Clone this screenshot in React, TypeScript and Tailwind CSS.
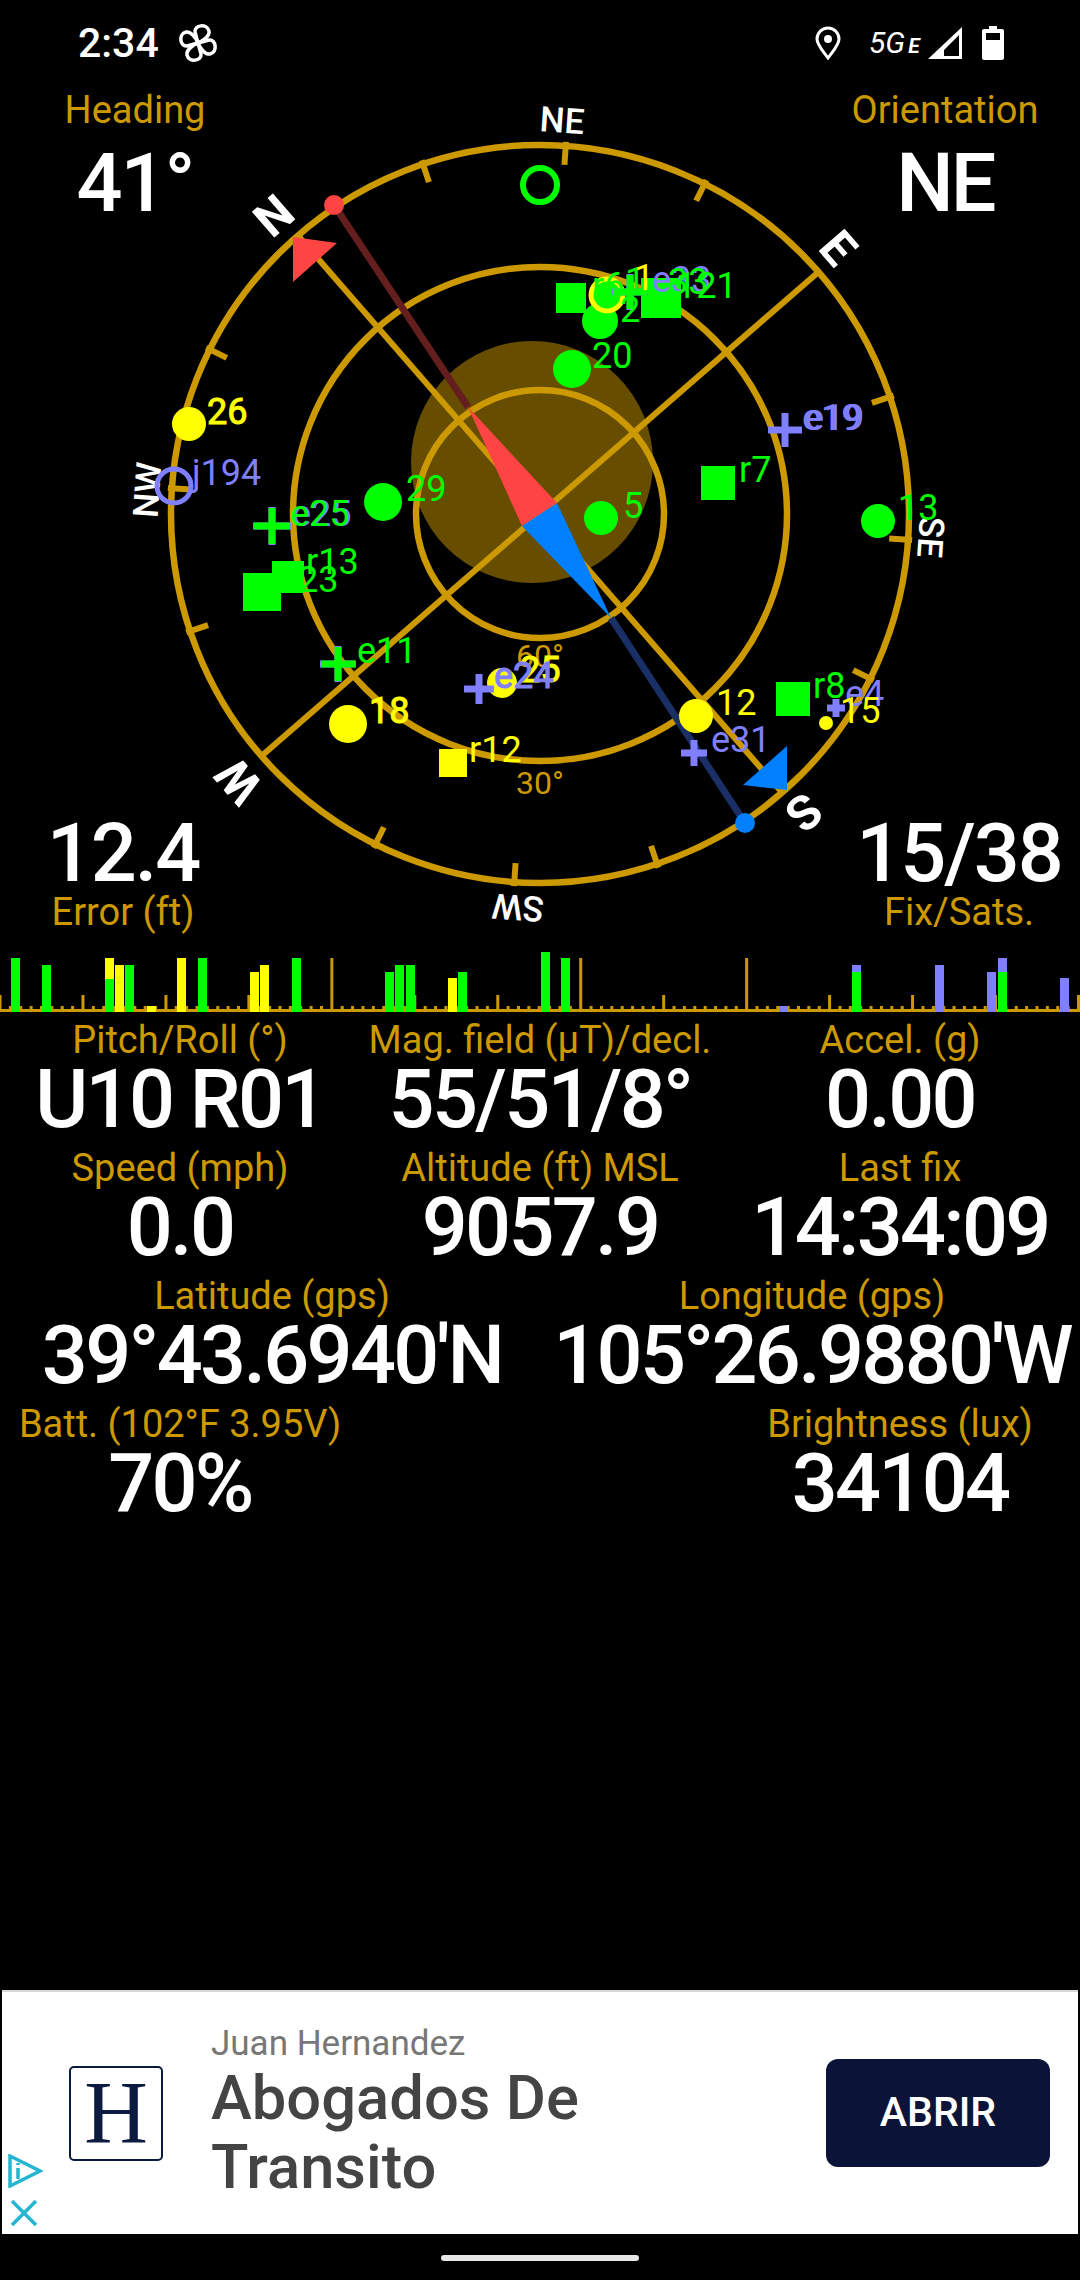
import React from "react";

const GOLD = "#cc9900";
const GREEN = "#00ff00";
const YELLOW = "#ffff00";
const PURPLE = "#7f7fff";
const CX = 540;
const CY = 514;

function polar(angle: number, r: number) {
  const a = (angle * Math.PI) / 180;
  return [CX + r * Math.sin(a), CY - r * Math.cos(a)];
}

type Mark = { k: "c" | "s" | "p" | "r"; x: number; y: number; r: number; c: string; under?: string };
const marks: Mark[] = [
  { k: "r", x: 174, y: 486, r: 17, c: PURPLE },
  { k: "c", x: 189, y: 424, r: 17, c: YELLOW },
  { k: "c", x: 572, y: 369, r: 19, c: GREEN },
  { k: "p", x: 785, y: 430, r: 17, c: PURPLE },
  { k: "c", x: 383, y: 502, r: 19, c: GREEN },
  { k: "c", x: 601, y: 518, r: 17, c: GREEN },
  { k: "s", x: 718, y: 483, r: 17, c: GREEN },
  { k: "c", x: 878, y: 521, r: 17, c: GREEN },
  { k: "p", x: 272, y: 526, r: 18, c: GREEN, under: PURPLE },
  { k: "s", x: 288, y: 577, r: 16, c: GREEN },
  { k: "s", x: 262, y: 592, r: 19, c: GREEN },
  { k: "p", x: 338, y: 664, r: 17, c: GREEN, under: PURPLE },
  { k: "c", x: 348, y: 724, r: 19, c: YELLOW },
  { k: "c", x: 502, y: 683, r: 15, c: YELLOW },
  { k: "p", x: 479, y: 689, r: 15, c: PURPLE },
  { k: "s", x: 453, y: 763, r: 14, c: YELLOW },
  { k: "c", x: 696, y: 716, r: 17, c: YELLOW },
  { k: "p", x: 694, y: 753, r: 13, c: PURPLE },
  { k: "s", x: 793, y: 699, r: 17, c: GREEN },
  { k: "p", x: 836, y: 708, r: 9, c: PURPLE },
  { k: "c", x: 826, y: 723, r: 7, c: YELLOW },
  { k: "s", x: 571, y: 298, r: 15, c: GREEN },
  { k: "s", x: 661, y: 298, r: 20, c: GREEN },
  { k: "c", x: 600, y: 321, r: 18, c: GREEN },
  { k: "c", x: 607, y: 295, r: 15, c: GREEN },
  { k: "r", x: 607, y: 295, r: 16, c: YELLOW },
  { k: "p", x: 630, y: 292, r: 17, c: GREEN, under: PURPLE },
];

type Lab = { t: string; x: number; y: number; c: string; bold?: boolean; s?: number };
const labels: Lab[] = [
  { t: "j194", x: 192, y: 485, c: PURPLE },
  { t: "26", x: 207, y: 424, c: YELLOW, bold: true },
  { t: "20", x: 592, y: 368, c: GREEN },
  { t: "e19", x: 802, y: 430, c: PURPLE },
  { t: "e19", x: 805, y: 430, c: PURPLE },
  { t: "29", x: 406, y: 501, c: GREEN },
  { t: "5", x: 623, y: 518, c: GREEN },
  { t: "r7", x: 739, y: 482, c: GREEN },
  { t: "13", x: 898, y: 520, c: GREEN },
  { t: "e25", x: 292, y: 526, c: PURPLE },
  { t: "e25", x: 290, y: 526, c: GREEN },
  { t: "r13", x: 306, y: 574, c: GREEN },
  { t: "23", x: 298, y: 592, c: GREEN },
  { t: "e11", x: 357, y: 663, c: GREEN },
  { t: "18", x: 369, y: 723, c: YELLOW, bold: true },
  { t: "60°", x: 516, y: 667, c: GOLD, s: 32 },
  { t: "30°", x: 516, y: 794, c: GOLD, s: 32 },
  { t: "25", x: 520, y: 682, c: YELLOW, bold: true },
  { t: "e24", x: 494, y: 688, c: PURPLE, bold: true },
  { t: "r12", x: 469, y: 762, c: YELLOW },
  { t: "12", x: 716, y: 715, c: YELLOW },
  { t: "e31", x: 711, y: 752, c: PURPLE },
  { t: "r8", x: 813, y: 698, c: GREEN },
  { t: "e4", x: 845, y: 706, c: PURPLE },
  { t: "15", x: 840, y: 723, c: YELLOW },
  { t: "r6", x: 592, y: 298, c: GREEN },
  { t: "2", x: 620, y: 322, c: GREEN },
  { t: "1", x: 625, y: 293, c: GREEN },
  { t: "1", x: 634, y: 290, c: YELLOW },
  { t: "e33", x: 652, y: 292, c: PURPLE },
  { t: "33", x: 668, y: 294, c: GREEN },
  { t: "121", x: 676, y: 298, c: GREEN },
];

const dirs = [
  { t: "N", x: 274, y: 216, a: -41, s: 48, b: 700 },
  { t: "NE", x: 562, y: 121, a: 4, s: 35, b: 500 },
  { t: "E", x: 838, y: 248, a: 49, s: 48, b: 700 },
  { t: "SE", x: 930, y: 537, a: 94, s: 35, b: 500 },
  { t: "S", x: 804, y: 812, a: 139, s: 48, b: 700 },
  { t: "SW", x: 518, y: 907, a: 184, s: 35, b: 500 },
  { t: "W", x: 239, y: 781, a: 229, s: 48, b: 700 },
  { t: "NW", x: 148, y: 490, a: 274, s: 35, b: 500 },
];

function Compass() {
  const ticks = [4, 26.5, 71.5, 94, 116.5, 161.5, 184, 206.5, 251.5, 274, 296.5, 341.5];
  return (
    <svg width="1080" height="1014" viewBox="0 0 1080 1014" className="absolute left-0 top-0">
      <circle cx="532" cy="462" r="121" fill="#664d00" />
      {[369, 247, 124].map((r) => (
        <circle key={r} cx={CX} cy={CY} r={r} fill="none" stroke={GOLD} strokeWidth="6.5" />
      ))}
      {[-41, 49].map((a) => {
        const [x1, y1] = polar(a, 369);
        const [x2, y2] = polar(a + 180, 369);
        return <line key={a} x1={x1} y1={y1} x2={x2} y2={y2} stroke={GOLD} strokeWidth="6" />;
      })}
      {ticks.map((a) => {
        const [x1, y1] = polar(a, 350);
        const [x2, y2] = polar(a, 373);
        return <line key={a} x1={x1} y1={y1} x2={x2} y2={y2} stroke={GOLD} strokeWidth="6" />;
      })}
      <line x1="334" y1="205" x2="468" y2="407" stroke="#641e1e" strokeWidth="7" />
      <line x1="611" y1="618" x2="745" y2="823" stroke="#1a2f66" strokeWidth="7" />
      <circle cx="334" cy="205" r="10" fill="#ff4444" />
      <circle cx="745" cy="823" r="10" fill="#007fff" />
      <polygon points="293,237 337,243 293,282" fill="#ff4444" />
      <polygon points="787,746 743,785 787,790" fill="#007fff" />
      <polygon points="468,407 557,503 522,526" fill="#ff4444" />
      <polygon points="611,618 557,503 522,526" fill="#007fff" />
      {dirs.map((d) => (
        <text
          key={d.t}
          x={d.x}
          y={d.y}
          fill="#fff"
          fontSize={d.s}
          fontWeight={d.b}
          textAnchor="middle"
          dominantBaseline="central"
          transform={`rotate(${d.a} ${d.x} ${d.y})`}
        >
          {d.t}
        </text>
      ))}
      <circle cx="540" cy="185" r="17" fill="none" stroke={GREEN} strokeWidth="6" />
      {marks.map((m, i) => {
        if (m.k === "c") return <circle key={i} cx={m.x} cy={m.y} r={m.r} fill={m.c} />;
        if (m.k === "r") return <circle key={i} cx={m.x} cy={m.y} r={m.r} fill="none" stroke={m.c} strokeWidth="5" />;
        if (m.k === "s")
          return <rect key={i} x={m.x - m.r} y={m.y - m.r} width={m.r * 2} height={m.r * 2} fill={m.c} />;
        return (
          <g key={i}>
            {m.under && (
              <path
                d={`M${m.x - m.r - 1} ${m.y}H${m.x + m.r + 1}M${m.x} ${m.y - m.r - 1}V${m.y + m.r + 1}`}
                stroke={m.under}
                strokeWidth="7"
              />
            )}
            <path
              d={`M${m.x - m.r} ${m.y}H${m.x + m.r}M${m.x} ${m.y - m.r}V${m.y + m.r}`}
              stroke={m.c}
              strokeWidth="7"
            />
          </g>
        );
      })}
      {labels.map((l, i) => (
        <text
          key={i}
          x={l.x}
          y={l.y}
          fill={l.c}
          fontSize={l.s ?? 36}
          stroke={l.bold ? l.c : "none"}
          strokeWidth={l.bold ? 1 : 0}
        >
          {l.t}
        </text>
      ))}
    </svg>
  );
}

type Bar = { x: number; t: number; c: string; t2?: number; c2?: string };
const bars: Bar[] = [
  { x: 11, t: 958, c: GREEN },
  { x: 42, t: 965, c: GREEN },
  { x: 105, t: 958, c: YELLOW, t2: 979, c2: GREEN },
  { x: 115, t: 965, c: YELLOW },
  { x: 125, t: 965, c: GREEN },
  { x: 147, t: 1006, c: YELLOW },
  { x: 177, t: 958, c: YELLOW },
  { x: 198, t: 958, c: GREEN },
  { x: 250, t: 972, c: YELLOW },
  { x: 260, t: 965, c: YELLOW },
  { x: 292, t: 958, c: GREEN },
  { x: 385, t: 972, c: GREEN },
  { x: 395, t: 965, c: GREEN },
  { x: 406, t: 965, c: GREEN },
  { x: 448, t: 978, c: YELLOW },
  { x: 458, t: 972, c: GREEN },
  { x: 541, t: 952, c: GREEN },
  { x: 561, t: 958, c: GREEN },
  { x: 779, t: 1006, c: PURPLE },
  { x: 852, t: 965, c: PURPLE, t2: 972, c2: GREEN },
  { x: 935, t: 965, c: PURPLE },
  { x: 987, t: 972, c: PURPLE },
  { x: 998, t: 958, c: PURPLE, t2: 972, c2: GREEN },
  { x: 1060, t: 978, c: PURPLE },
];

function Histogram() {
  const ticks = Array.from({ length: 105 }, (_, i) => i);
  return (
    <svg width="1080" height="1014" viewBox="0 0 1080 1014" className="absolute left-0 top-0">
      {ticks.map((i) => {
        const x = i * 10.37;
        const top = i === 32 || i === 56 || i === 72 ? 958 : i % 8 === 0 ? 995 : 1006;
        return <rect key={i} x={x - 1.5} y={top} width="3" height={1012 - top} fill={GOLD} />;
      })}
      <rect x="0" y="1009" width="1080" height="3" fill={GOLD} />
      {bars.map((b, i) => (
        <g key={i}>
          <rect x={b.x} y={b.t} width="9" height={1012 - b.t} fill={b.c} />
          {b.c2 && <rect x={b.x} y={b.t2} width="9" height={1012 - (b.t2 as number)} fill={b.c2} />}
        </g>
      ))}
    </svg>
  );
}

function Stat({ label, value }: { label: string; value: string }) {
  return (
    <div className="flex flex-col items-center whitespace-nowrap">
      <span className="text-[38px] leading-[42px] text-[#cc9900]">{label}</span>
      <span className="text-[81px] leading-[77px] font-medium text-white tracking-[-2.7px]">{value}</span>
    </div>
  );
}

function StatusBar() {
  return (
    <div className="relative z-10 flex h-[58px] items-center justify-between pl-[78px] pr-[76px] text-white">
      <div className="flex items-center gap-[19px]">
        <span className="text-[41px] leading-none font-medium">2:34</span>
        <svg width="40" height="40" viewBox="-20 -20 40 40" fill="none" stroke="#fff" strokeWidth="3.5">
          {[0, 90, 180, 270].map((a) => (
            <path key={a} transform={`rotate(${a})`} d="M0 0L-3 -11C-4 -18 9 -20 11 -12C12 -7 5 -2 0 0Z" />
          ))}
        </svg>
      </div>
      <div className="flex items-center">
        <svg width="26" height="34" viewBox="0 0 26 34" fill="none">
          <path d="M13 32C8 25 2 19 2 13a11 11 0 0 1 22 0C24 19 18 25 13 32Z" stroke="#fff" strokeWidth="3" />
          <circle cx="13" cy="13" r="4" fill="#fff" />
        </svg>
        <span className="ml-[28px] w-[58px] text-[30px] leading-none italic">
          5G<span className="ml-[3px] text-[21px] font-bold">E</span>
        </span>
        <svg width="34" height="32" viewBox="0 0 34 32" className="ml-[1px]">
          <path fillRule="evenodd" d="M34 0V32H0ZM31 8 16 23V29H31Z" fill="#fff" />
        </svg>
        <svg width="22" height="34" viewBox="0 0 22 34" className="ml-[20px]">
          <path
            fillRule="evenodd"
            d="M7 0H15V3H20a2 2 0 0 1 2 2V32a2 2 0 0 1 -2 2H2a2 2 0 0 1 -2 -2V5a2 2 0 0 1 2 -2H7ZM4 7V14H18V7Z"
            fill="#fff"
          />
        </svg>
      </div>
    </div>
  );
}

function Ad() {
  return (
    <div className="relative mx-[2px] flex h-[244px] w-[1076px] items-center border-t-2 border-[#d8d8d8] bg-white">
      <div className="ml-[67px] flex h-[95px] w-[94px] items-center justify-center rounded-[5px] border-2 border-[#0c1a40] font-['Liberation_Serif',serif] text-[88px] leading-none text-[#0c1a40]">
        H
      </div>
      <div className="ml-[48px] flex flex-col">
        <span className="text-[35px] leading-[40px] text-[#777777]">Juan Hernandez</span>
        <span className="w-[420px] text-[61.5px] leading-[69px] text-[#444444] font-medium">Abogados De Transito</span>
      </div>
      <div className="ml-auto mr-[28px] flex h-[108px] w-[224px] items-center justify-center rounded-[12px] bg-[#0c1338] text-[41px] font-medium text-white">
        ABRIR
      </div>
      <svg width="36" height="34" viewBox="0 0 36 34" className="absolute bottom-[46px] left-[5px]" fill="none" stroke="#25b5d0" strokeWidth="3.5">
        <path d="M3 2 33 17 3 32Z" />
        <path d="M11 14V25M11 9V11" />
      </svg>
      <svg width="30" height="28" viewBox="0 0 30 28" className="absolute bottom-[7px] left-[7px]" fill="none" stroke="#25b5d0" strokeWidth="3.5">
        <path d="M3 2 27 26M27 2 3 26" />
      </svg>
    </div>
  );
}

export default function App() {
  return (
    <div className="flex h-[2280px] w-[1080px] flex-col overflow-hidden bg-black font-['Roboto',sans-serif]">
      <div className="relative h-[1014px] w-[1080px] shrink-0 pt-[14px]">
        <Compass />
        <Histogram />
        <StatusBar />
        <div className="relative mt-[17px] flex justify-between px-[44px]">
          <div className="flex w-[182px] flex-col items-center">
            <span className="text-[38px] leading-[42px] text-[#cc9900]">Heading</span>
            <span className="mt-[9px] text-[81px] leading-[87px] font-medium text-white tracking-[-2px]">41°</span>
          </div>
          <div className="flex w-[182px] flex-col items-center">
            <span className="text-[38px] leading-[42px] text-[#cc9900]">Orientation</span>
            <span className="mt-[9px] text-[81px] leading-[87px] font-medium text-white tracking-[-2.8px]">NE</span>
          </div>
        </div>
        <div className="relative mt-[583px] flex justify-between pl-[44px] pr-[54px]">
          <div className="flex w-[158px] flex-col items-center">
            <span className="text-[81px] leading-[87px] font-medium text-white tracking-[-2px]">12.4</span>
            <span className="text-[38px] leading-[30px] text-[#cc9900]">Error (ft)</span>
          </div>
          <div className="flex w-[134px] flex-col items-center whitespace-nowrap">
            <span className="text-[81px] leading-[87px] font-medium text-white tracking-[-2px]">15/38</span>
            <span className="text-[38px] leading-[30px] text-[#cc9900]">Fix/Sats.</span>
          </div>
        </div>
      </div>
      <div className="grid h-[128px] shrink-0 grid-cols-3 pt-[5px]">
        <Stat label="Pitch/Roll (°)" value="U10 R01" />
        <Stat label="Mag. field (µT)/decl." value="55/51/8°" />
        <Stat label="Accel. (g)" value="0.00" />
      </div>
      <div className="grid h-[128px] shrink-0 grid-cols-3 pt-[5px]">
        <Stat label="Speed (mph)" value="0.0" />
        <Stat label="Altitude (ft) MSL" value="9057.9" />
        <Stat label="Last fix" value="14:34:09" />
      </div>
      <div className="grid h-[128px] shrink-0 grid-cols-[544px_536px] pt-[5px]">
        <Stat label="Latitude (gps)" value="39°43.6940'N" />
        <Stat label="Longitude (gps)" value="105°26.9880'W" />
      </div>
      <div className="grid h-[128px] shrink-0 grid-cols-3 pt-[5px]">
        <Stat label="Batt. (102°F 3.95V)" value="70%" />
        <div />
        <Stat label="Brightness (lux)" value="34104" />
      </div>
      <div className="flex-1" />
      <Ad />
      <div className="flex h-[46px] shrink-0 items-start justify-center pt-[21px]">
        <div className="h-[6px] w-[198px] rounded-full bg-[#e8e8e8]" />
      </div>
    </div>
  );
}
